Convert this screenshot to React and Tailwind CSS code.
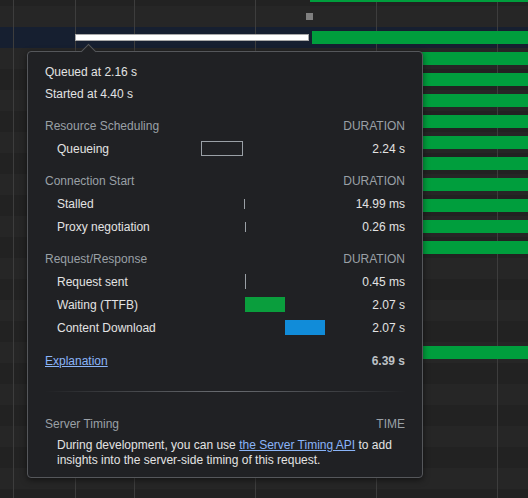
const font = { fontFamily: '"Liberation Sans", Arial, sans-serif' }

const gridLines = [13, 75, 134, 255, 376, 497]

function Waterfall() {
  const rows = []
  const bars = []
  for (let k = 0; k < 25; k++) {
    const y = -15 + 21 * k
    const fill = k === 2 ? '#161f30' : k % 2 === 1 ? '#262626' : '#222222'
    rows.push(<rect key={'r' + k} x="0" y={y} width="528" height="21" fill={fill} />)
    if (k === 0) bars.push(<rect key={'b' + k} x="310" y={y + 4} width="218" height="13" fill="#009e3d" />)
    if ((k >= 3 && k <= 12) || k === 17)
      bars.push(<rect key={'b' + k} x="312" y={y + 4} width="216" height="13" fill="#009e3d" />)
  }
  return (
    <svg width="528" height="498" className="block">
      {rows}
      {gridLines.map((x) => (
        <line key={x} x1={x + 0.5} y1="0" x2={x + 0.5} y2="498" stroke="#3d3d3d" strokeWidth="1" />
      ))}
      {bars}
      <rect x="306" y="13" width="7" height="7" fill="#7f7f7f" />
      <rect x="75.5" y="34.5" width="233" height="6" fill="#ffffff" stroke="#a8a8a8" strokeWidth="1" />
      <rect x="312" y="31" width="216" height="13" fill="#009e3d" />
    </svg>
  )
}

function Heading({ title, right }) {
  return (
    <div className="grid grid-cols-[156px_124px_1fr] h-[23px] items-center text-[#9aa0a6]">
      <span>{title}</span>
      <span />
      <span className="text-right pr-px">{right}</span>
    </div>
  )
}

function Row({ label, value, bar }) {
  return (
    <div className="grid grid-cols-[156px_124px_1fr] h-[23px] items-center">
      <span className="pl-3">{label}</span>
      <div className="relative h-full flex items-center">{bar}</div>
      <span className="text-right pr-px">{value}</span>
    </div>
  )
}

function Tooltip() {
  return (
    <div
      style={font}
      className="absolute left-[27px] top-[51px] w-[396px] rounded-[4px] border border-[#55575b] bg-[#202124] pl-[17px] pr-[16px] pt-[9px] pb-[9px] text-[12px] text-[#e3e3e3] shadow-[0_2px_6px_rgba(0,0,0,0.5)]"
    >
      <div className="absolute -top-[6px] left-[55px] w-[11px] h-[11px] rotate-45 border-l border-t border-[#55575b] bg-[#202124]" />
      <div className="h-[22px] flex items-center">Queued at 2.16 s</div>
      <div className="h-[22px] flex items-center">Started at 4.40 s</div>

      <div className="mt-[9px]">
        <Heading title="Resource Scheduling" right="DURATION" />
        <Row
          label="Queueing"
          value="2.24 s"
          bar={<div className="absolute left-0 w-[42px] h-[15px] border border-[#9aa0a6]" />}
        />
      </div>

      <div className="mt-[9px]">
        <Heading title="Connection Start" right="DURATION" />
        <Row
          label="Stalled"
          value="14.99 ms"
          bar={<div className="absolute left-[43px] w-px h-[10px] bg-[#9aa0a6]" />}
        />
        <Row
          label="Proxy negotiation"
          value="0.26 ms"
          bar={<div className="absolute left-[44px] w-px h-[10px] bg-[#9aa0a6]" />}
        />
      </div>

      <div className="mt-[9px]">
        <Heading title="Request/Response" right="DURATION" />
        <Row
          label="Request sent"
          value="0.45 ms"
          bar={<div className="absolute left-[44px] w-px h-[15px] bg-[#9aa0a6]" />}
        />
        <Row
          label="Waiting (TTFB)"
          value="2.07 s"
          bar={<div className="absolute left-[44px] w-[40px] h-[15px] bg-[#0a9e3d]" />}
        />
        <Row
          label="Content Download"
          value="2.07 s"
          bar={<div className="absolute left-[84px] w-[40px] h-[15px] bg-[#118cd9]" />}
        />
      </div>

      <div className="mt-[10px] h-[23px] flex items-center justify-between">
        <a className="text-[#8ab4f8] underline">Explanation</a>
        <span className="font-bold text-[#bdc1c6] pr-px">6.39 s</span>
      </div>

      <div className="mt-[19px] h-px bg-gradient-to-r from-transparent via-[#6a6d72] to-transparent" />

      <div className="mt-[20px] h-[23px] flex items-center justify-between text-[#9aa0a6]">
        <span>Server Timing</span>
        <span className="pr-px">TIME</span>
      </div>
      <p className="pl-3 leading-[15px] pt-[3px]">
        During development, you can use{' '}
        <a className="text-[#8ab4f8] underline">the Server Timing API</a> to add insights into the
        server-side timing of this request.
      </p>
    </div>
  )
}

export default function App() {
  return (
    <div className="relative w-[528px] h-[498px] overflow-hidden bg-[#222222]">
      <Waterfall />
      <Tooltip />
    </div>
  )
}
